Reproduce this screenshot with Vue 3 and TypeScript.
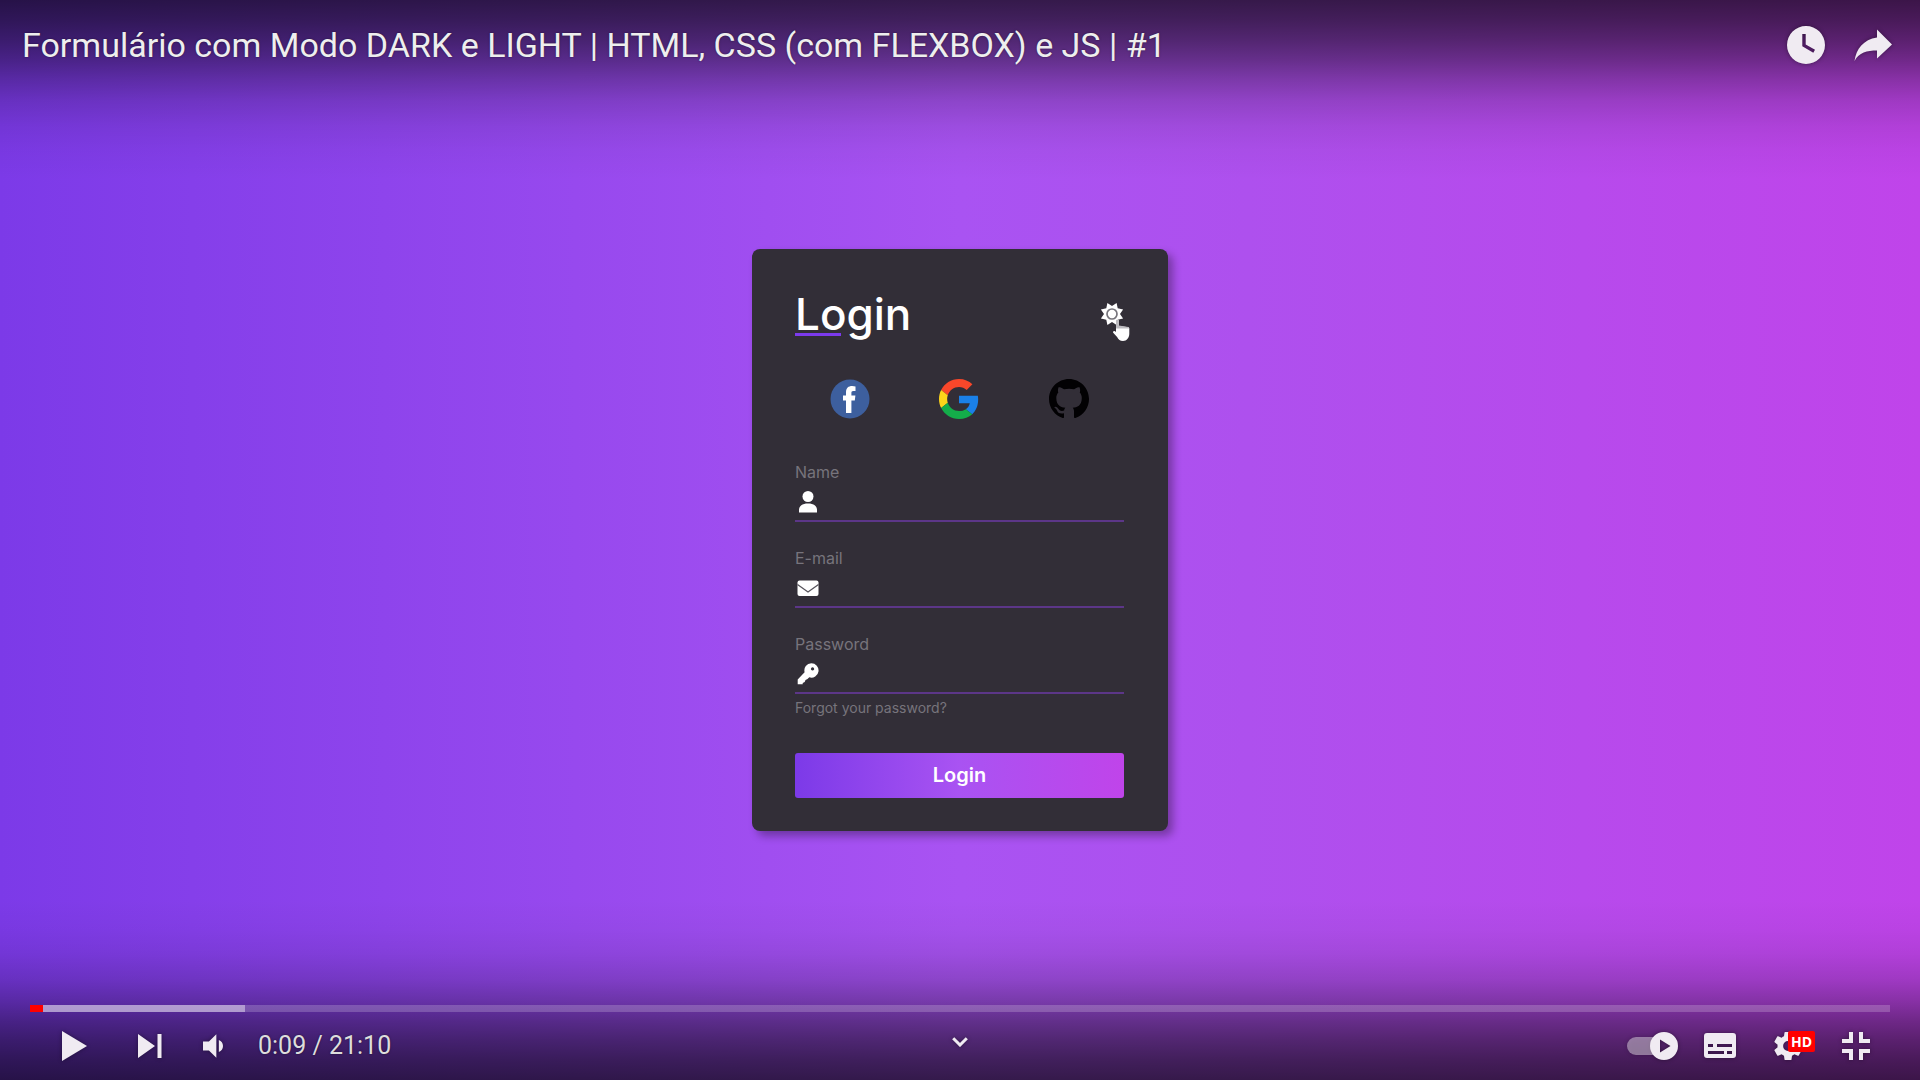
<script setup lang="ts">
import { ref } from 'vue'

interface Field {
  id: string
  label: string
  type: string
  icon: 'user' | 'mail' | 'key'
}

const fields: Field[] = [
  { id: 'name', label: 'Name', type: 'text', icon: 'user' },
  { id: 'email', label: 'E-mail', type: 'email', icon: 'mail' },
  { id: 'password', label: 'Password', type: 'password', icon: 'key' },
]

const values = ref<Record<string, string>>({ name: '', email: '', password: '' })

const duration = 1270
const current = 9
const played = (current / duration) * 100
const buffered = 11.55
</script>

<template>
  <div class="player">
    <header class="top">
      <h2 class="title">Formulário com Modo DARK e LIGHT | HTML, CSS (com FLEXBOX) e JS | #1</h2>
      <div class="top-actions">
        <button class="icon-btn top-btn" type="button" aria-label="Watch later">
          <svg width="38" height="38" viewBox="0 0 38 38">
            <path fill-rule="evenodd" d="M19 0a19 19 0 1 0 0 38a19 19 0 1 0 0-38zM15.300 8v12.200l11 6.500l1.700-3L18.700 18.400V8z" />
          </svg>
        </button>
        <button class="icon-btn top-btn" type="button" aria-label="Share">
          <svg width="38" height="38" viewBox="0 0 38 38">
            <path d="M23 3.500L38 18.500L23 32.500V24.500C13 24.500 5 26.500 .5 35C2 23 9.500 13.500 23 11.500z" />
          </svg>
        </button>
      </div>
    </header>

    <main class="stage">
      <form class="card" @submit.prevent>
        <div class="card-head">
          <h1>Login</h1>
          <button class="theme" type="button" aria-label="Toggle theme">
            <svg width="24" height="24" viewBox="-12 -12 24 24">
              <polygon fill="#fff" points="4.600,-11.100 5.700,-5.700 11.100,-4.600 8,0 11.100,4.600 5.700,5.700 4.600,11.100 0,8 -4.600,11.100 -5.700,5.700 -11.100,4.600 -8,0 -11.100,-4.600 -5.700,-5.700 -4.600,-11.100 0,-8" />
              <circle r="5" fill="#fff" stroke="#77757c" stroke-width="1.700" />
            </svg>
            <svg class="pointer" width="18" height="23" viewBox="0 0 18 23">
              <path fill="#fff" d="M4 1.500C4 .4 6.600 .4 6.800 1.500V7l9.500 1.300q1 .2 1 1.300v5.200c0 4-2.500 7.200-6.300 7.200c-3 0-4.500-1.500-5.900-4L1.200 13.800c-.8-1.600 1.300-2.500 2.800-.8z" />
              <path fill="#bdbbc0" d="M4 1.500C4 .4 6.600 .4 6.800 1.500V6.500l9.500 1.600q.9.300.9 1.500H4z" />
            </svg>
          </button>
        </div>

        <div class="social">
          <a href="#" aria-label="Facebook">
            <svg width="40" height="40" viewBox="0 0 40 40">
              <circle cx="20" cy="20" r="19.500" fill="#3d5f9e" />
              <path fill="#fff" d="M16 34V21.500h-3v-5h3v-3.200c0-4.200 2.400-6.200 6.200-6.200q1.800 0 3.300.3v4.500h-2.200c-1.600 0-1.900.8-1.900 2v2.600h4l-.6 5h-3.400V34z" />
            </svg>
          </a>
          <a href="#" aria-label="Google">
            <svg width="40" height="40" viewBox="0 0 48 48">
              <path fill="#f9472a" d="M24 9.500c3.540 0 6.710 1.220 9.210 3.600l6.850-6.850C35.900 2.380 30.470 0 24 0 14.620 0 6.510 5.380 2.560 13.220l7.980 6.190C12.430 13.720 17.740 9.500 24 9.500z" />
              <path fill="#1a80e8" d="M46.980 24.550c0-1.570-.15-3.090-.38-4.550H24v9.020h12.940c-.58 2.960-2.260 5.480-4.780 7.180l7.730 6c4.510-4.180 7.090-10.360 7.090-17.650z" />
              <path fill="#fdd41a" d="M10.530 28.590c-.48-1.450-.76-2.990-.76-4.590s.27-3.140.76-4.590l-7.980-6.190C.92 16.460 0 20.120 0 24c0 3.880.92 7.540 2.560 10.780l7.970-6.190z" />
              <path fill="#14ad4a" d="M24 48c6.480 0 11.930-2.130 15.890-5.810l-7.730-6c-2.150 1.450-4.920 2.300-8.160 2.300-6.260 0-11.570-4.220-13.470-9.910l-7.980 6.190C6.510 42.620 14.620 48 24 48z" />
            </svg>
          </a>
          <a href="#" aria-label="GitHub">
            <svg width="40" height="40" viewBox="0 0 16 16">
              <path fill="#020103" d="M8 0C3.580 0 0 3.580 0 8c0 3.540 2.290 6.530 5.470 7.590.4.070.55-.17.55-.38 0-.19-.01-.82-.01-1.490-2.010.37-2.530-.49-2.690-.94-.09-.23-.48-.94-.82-1.130-.28-.15-.68-.52-.01-.53.63-.01 1.080.58 1.230.82.72 1.210 1.870.87 2.330.66.07-.52.28-.87.51-1.070-1.780-.2-3.640-.89-3.640-3.950 0-.87.31-1.590.82-2.150-.08-.2-.36-1.020.08-2.120 0 0 .67-.21 2.200.82.64-.18 1.320-.27 2-.27.68 0 1.360.09 2 .27 1.530-1.040 2.200-.82 2.200-.82.44 1.100.16 1.920.08 2.120.51.56.82 1.270.82 2.150 0 3.070-1.870 3.750-3.650 3.950.29.25.54.73.54 1.480 0 1.070-.01 1.930-.01 2.200 0 .21.15.46.55.38A8.013 8.013 0 0016 8c0-4.420-3.580-8-8-8z" />
            </svg>
          </a>
        </div>

        <div class="fields">
          <div v-for="f in fields" :key="f.id" class="field">
            <label :for="f.id">{{ f.label }}</label>
            <div class="entry">
              <svg v-if="f.icon === 'user'" width="22" height="22" viewBox="0 0 22 22">
                <circle cx="11" cy="5.500" r="5.500" />
                <path d="M2 21.500v-2.300c0-4.200 3-6.700 9-6.700s9 2.500 9 6.700v2.300z" />
              </svg>
              <svg v-else-if="f.icon === 'mail'" width="22" height="22" viewBox="0 0 22 22">
                <rect x=".5" y="3.500" width="21" height="15.500" rx="2" />
                <path d="M.5 7.500L11 15L21.500 7.500" fill="none" stroke="#57545c" stroke-width="1.300" />
              </svg>
              <svg v-else width="22" height="22" viewBox="0 0 22 22">
                <path fill-rule="evenodd" d="M14.300 .2a7.200 7.200 0 1 1-2 14.100L10.500 16.100l-2 1l-.8 2l-2 .8v1.300H.7V16.400L7.600 9.200A7.200 7.200 0 0 1 14.300 .2zM15.500 4.300a1.600 1.600 0 1 0 .1 0z" />
              </svg>
              <input :id="f.id" v-model="values[f.id]" :type="f.type" autocomplete="off" />
            </div>
          </div>
        </div>

        <a class="forgot" href="#">Forgot your password?</a>
        <button class="submit" type="submit">Login</button>
      </form>
    </main>

    <footer class="bottom">
      <div class="progress">
        <div class="buffered" :style="{ width: buffered + '%' }"></div>
        <div class="played" :style="{ width: played + '%' }"></div>
      </div>
      <div class="controls">
        <div class="left">
          <button class="icon-btn nav-btn" type="button" aria-label="Play">
            <svg width="25" height="30" viewBox="0 0 25 30"><path d="M0 0L25 15L0 30z" /></svg>
          </button>
          <button class="icon-btn nav-btn" type="button" aria-label="Next">
            <svg width="24" height="24" viewBox="0 0 24 24"><path d="M0 0L17 12L0 24zM19.500 0h4v24h-4z" /></svg>
          </button>
          <button class="icon-btn volume-btn" type="button" aria-label="Mute">
            <svg width="20" height="24" viewBox="8 10 13.500 16">
              <path d="M8 21h4l5 5V10l-5 5H8zM18.700 14v8c1.700-.6 2.800-2.200 2.800-4s-1.100-3.400-2.800-4z" />
            </svg>
          </button>
          <span class="time">0:09 / 21:10</span>
        </div>

        <button class="icon-btn more" type="button" aria-label="More videos">
          <svg width="16" height="10" viewBox="0 0 16 10">
            <path d="M1.200 1.200L8 8L14.800 1.200" fill="none" stroke="#f0ebf2" stroke-width="3" />
          </svg>
        </button>

        <div class="right">
          <button class="icon-btn tool-btn" type="button" aria-label="Autoplay">
            <svg width="52" height="30" viewBox="0 0 52 30">
              <path d="M10 6H28V24H10A9 9 0 0 1 10 6z" opacity=".45" />
              <path fill-rule="evenodd" d="M38 1a14 14 0 1 0 0 28a14 14 0 1 0 0-28zM34 8.500L44.500 15L34 21.500z" />
            </svg>
          </button>
          <button class="icon-btn tool-btn" type="button" aria-label="Subtitles">
            <svg width="32" height="26" viewBox="0 0 32 26">
              <path fill-rule="evenodd" d="M3 0h26q3 0 3 3v19q0 3-3 3H3q-3 0-3-3V3q0-3 3-3zM4 11v3h5v-3zM13 11v3h15v-3zM4 18v3h16v-3zM23 18v3h5v-3z" />
            </svg>
          </button>
          <button class="icon-btn tool-btn" type="button" aria-label="Settings">
            <span class="gear">
              <svg width="28" height="28" viewBox="2.200 2 19.600 20">
                <path d="M19.430 12.980c.04-.32.07-.64.07-.98s-.03-.66-.07-.98l2.110-1.650c.19-.15.24-.42.12-.64l-2-3.460c-.12-.22-.39-.3-.61-.22l-2.490 1c-.52-.4-1.080-.73-1.690-.98l-.38-2.650C14.460 2.180 14.250 2 14 2h-4c-.25 0-.46.18-.49.42l-.38 2.650c-.61.25-1.170.59-1.690.98l-2.490-1c-.23-.09-.49 0-.61.22l-2 3.460c-.13.22-.07.49.12.64l2.110 1.650c-.04.32-.07.65-.07.98s.03.66.07.98l-2.110 1.650c-.19.15-.24.42-.12.64l2 3.460c.12.22.39.3.61.22l2.490-1c.52.4 1.080.73 1.690.98l.38 2.650c.03.24.24.42.49.42h4c.25 0 .46-.18.49-.42l.38-2.650c.61-.25 1.170-.59 1.690-.98l2.490 1c.23.09.49 0 .61-.22l2-3.460c.12-.22.07-.49-.12-.64zM12 15.500a3.500 3.500 0 1 1 0-7a3.500 3.500 0 0 1 0 7z" />
              </svg>
              <span class="hd">HD</span>
            </span>
          </button>
          <button class="icon-btn tool-btn" type="button" aria-label="Exit full screen">
            <svg width="30" height="30" viewBox="0 0 30 30">
              <path d="M8 1h4v11H1V8h7zM18 1h4v7h7v4H18zM1 18h11v11H8v-7H1zM18 18h11v4h-7v7h-4z" />
            </svg>
          </button>
        </div>
      </div>
    </footer>
  </div>
</template>

<style>
body {
  margin: 0;
}
</style>

<style scoped>
* {
  box-sizing: border-box;
}

.player {
  --shade: rgba(0, 0, 0, 0.69) 0%, rgba(0, 0, 0, 0.62) 11%, rgba(0, 0, 0, 0.53) 22%, rgba(0, 0, 0, 0.42) 33%,
    rgba(0, 0, 0, 0.29) 44%, rgba(0, 0, 0, 0.17) 56%, rgba(0, 0, 0, 0.08) 70%, rgba(0, 0, 0, 0.03) 83%, rgba(0, 0, 0, 0) 100%;
  min-height: 100vh;
  display: flex;
  flex-direction: column;
  background: linear-gradient(90deg, #7c3ae8 0%, #a953f2 50%, #ae50ee 65%, #c044ea 100%);
  font-family: Roboto, sans-serif;
}

.top {
  min-height: 180px;
  display: flex;
  justify-content: space-between;
  align-items: flex-start;
  padding: 20px 14px 0 22px;
  background: linear-gradient(180deg, var(--shade));
}

.title {
  margin: 0;
  font-size: 34px;
  line-height: 50px;
  font-weight: 400;
  color: #eee;
  text-shadow: 0 0 2px rgba(0, 0, 0, 0.5);
}

.top-actions {
  display: flex;
}

.icon-btn {
  display: flex;
  align-items: center;
  justify-content: center;
  padding: 0;
  border: 0;
  background: none;
  cursor: pointer;
}

.icon-btn svg {
  fill: #f0ebf2;
  filter: drop-shadow(0 0 2px rgba(0, 0, 0, 0.4));
}

.top-btn {
  width: 67px;
  height: 50px;
}

.stage {
  flex: 1;
  display: flex;
  align-items: center;
  justify-content: center;
}

.card {
  width: 416px;
  display: flex;
  flex-direction: column;
  padding: 31px 44px 33px 43px;
  border-radius: 8px;
  background: #322e37;
  box-shadow: 5px 5px 8px rgba(0, 0, 0, 0.32);
  font-family: Inter, sans-serif;
}

.card-head {
  display: flex;
  align-items: center;
  justify-content: space-between;
  height: 68px;
}

.card-head h1 {
  position: relative;
  z-index: 0;
  margin: 0;
  font-size: 44px;
  line-height: 68px;
  font-weight: 500;
  color: #fff;
}

.card-head h1::after {
  content: '';
  position: absolute;
  z-index: -1;
  left: 0;
  bottom: 12px;
  width: 46px;
  height: 3px;
  background: #7c3aed;
}

.theme {
  position: relative;
  display: flex;
  padding: 0;
  border: 0;
  background: none;
}

.pointer {
  position: absolute;
  left: 12px;
  top: 17px;
}

.social {
  display: flex;
  justify-content: space-around;
  margin: 31px 0 41px;
}

.social a,
.social svg {
  display: block;
}

.fields {
  display: flex;
  flex-direction: column;
  gap: 24px;
}

.field label {
  display: block;
  font-size: 16px;
  line-height: 24px;
  color: #77747c;
}

.entry {
  display: flex;
  align-items: center;
  gap: 8px;
  height: 38px;
  padding-left: 2px;
  border-bottom: 2px solid #5c3688;
}

.entry svg {
  flex: none;
  fill: #fff;
}

.entry input {
  flex: 1;
  min-width: 0;
  height: 100%;
  padding: 0;
  border: 0;
  outline: 0;
  background: transparent;
  color: #fff;
  font: inherit;
}

.forgot {
  align-self: flex-start;
  margin-top: 4px;
  font-size: 14px;
  line-height: 20px;
  color: #77747c;
  text-decoration: none;
}

.submit {
  height: 45px;
  margin-top: 35px;
  padding: 0 0 2px;
  border: 0;
  border-radius: 3px;
  background: linear-gradient(90deg, #7c3ae8 0%, #a953f2 50%, #c044ea 100%);
  color: #fff;
  font-family: inherit;
  font-size: 20px;
  font-weight: 600;
}

.bottom {
  min-height: 180px;
  padding-top: 105px;
  background: linear-gradient(0deg, var(--shade));
}

.progress {
  display: grid;
  height: 7px;
  margin: 0 30px;
  background: rgba(255, 255, 255, 0.2);
}

.buffered,
.played {
  grid-area: 1 / 1;
}

.buffered {
  background: rgba(255, 255, 255, 0.42);
}

.played {
  background: #f00;
}

.controls {
  display: grid;
  grid-template-columns: 1fr auto 1fr;
  height: 68px;
  padding: 0 30px;
}

.left,
.right {
  display: flex;
  align-items: center;
}

.left {
  padding-left: 7px;
}

.right {
  justify-content: flex-end;
}

.nav-btn {
  width: 75px;
  height: 68px;
}

.volume-btn {
  width: 52px;
  height: 68px;
}

.tool-btn {
  width: 68px;
  height: 68px;
}

.time {
  margin-left: 19px;
  font-size: 25px;
  line-height: 68px;
  color: #ddd;
  text-shadow: 0 0 2px rgba(0, 0, 0, 0.5);
}

.more {
  padding-bottom: 8px;
}

.gear {
  position: relative;
  display: flex;
}

.hd {
  position: absolute;
  left: 14px;
  top: -1px;
  padding: 0 3px;
  border-radius: 2px;
  background: #f00;
  color: #fff;
  font-family: 'Open Sans', sans-serif;
  font-size: 14px;
  line-height: 21px;
  font-weight: 700;
}
</style>
